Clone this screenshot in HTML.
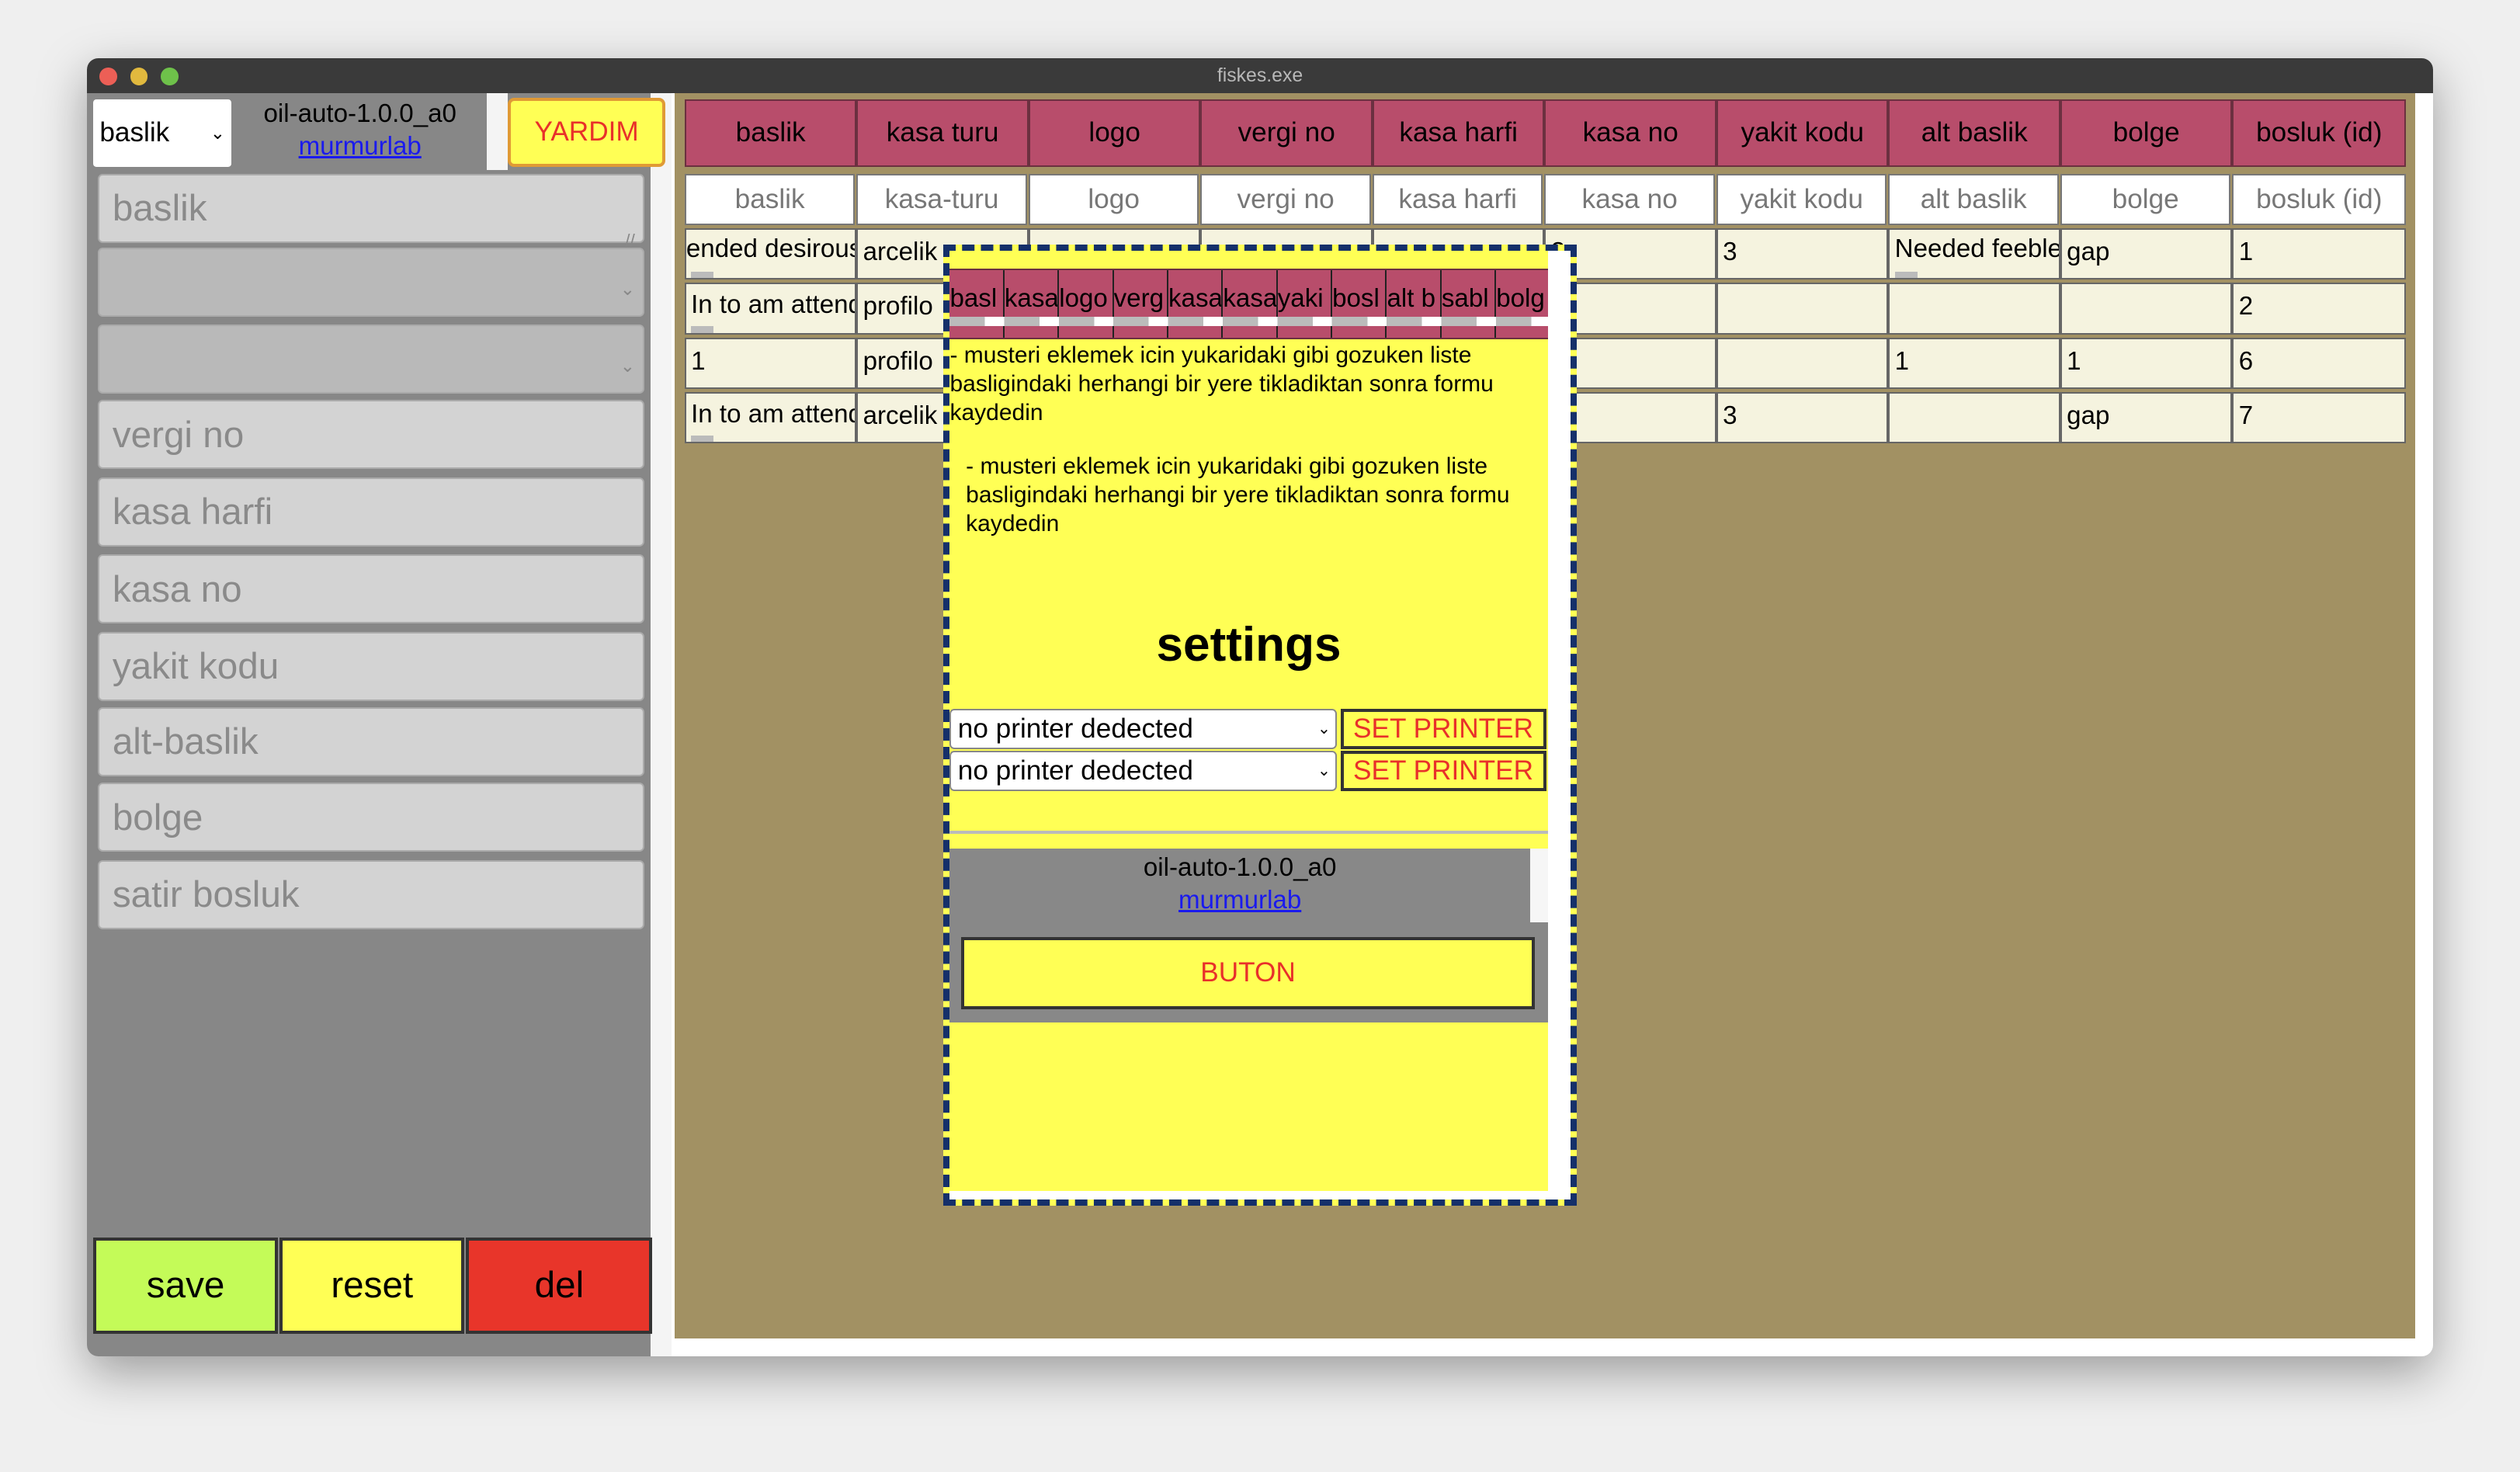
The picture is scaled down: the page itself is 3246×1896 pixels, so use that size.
<!DOCTYPE html>
<html><head><meta charset="utf-8"><style>
*{box-sizing:border-box;margin:0;padding:0}
html,body{width:3246px;height:1896px;overflow:hidden;background:#efefef}
#z{zoom:2.0702;width:1568px;height:916px;position:relative;font-family:"Liberation Sans",Arial,sans-serif}
.a{position:absolute}
.win{left:54px;top:36px;width:1460px;height:808px;border-radius:7px;overflow:hidden;box-shadow:0 10px 30px rgba(0,0,0,.35);background:#fff}
.tb{left:0;top:0;width:1460px;height:22px;background:#3a3a3a;color:#b8b8b8;font-size:12px;text-align:center;line-height:22px}
.dot{width:11px;height:11px;border-radius:50%;top:6px}
.fld{left:7px;width:340px;height:43px;background:#d3d3d3;border-radius:3px;color:#8a8a8a;font-size:23px;padding:8px 8px;line-height:26px;border:1px solid #aaa}
.sel{background:#b9b9b9}
.chev{position:absolute;right:5px;top:12px;font-size:11px;color:#888}
.btn{top:734px;height:60px;border:2px solid #333;font-size:23px;text-align:center;line-height:56px}
.th{height:42px;background:#b84d6b;border:1px solid #6b3040;font-size:17px;text-align:center;line-height:40px}
.ti{height:32px;background:#fff;border:1px solid #777;font-size:17px;color:#777;text-align:center;line-height:30px}
.td{height:32px;background:#f5f3df;border:1px solid #666;font-size:16px;line-height:28px;padding-left:3px;white-space:nowrap;overflow:hidden}
.sb{position:absolute;left:3px;bottom:0;width:14px;height:4px;background:#bbb}
</style></head><body><div id="z">
<div class="a win">
 <div class="a tb">fiskes.exe</div>
 <div class="a dot" style="left:8px;background:#ec5f56"></div>
 <div class="a dot" style="left:27px;background:#e1b93e"></div>
 <div class="a dot" style="left:46px;background:#6ec14a"></div>
 <!-- left panel -->
 <div class="a" style="left:0;top:22px;width:351px;height:786px;background:#878787"></div>
 <div class="a" style="left:351px;top:22px;width:13px;height:786px;background:#f4f4f4"></div>
 <div class="a" style="left:249px;top:22px;width:13px;height:48px;background:#f4f4f4"></div>
 <div class="a" style="left:4px;top:26px;width:86px;height:42px;background:#fff;border-radius:2px;font-size:17px;line-height:42px;padding-left:4px">baslik<span style="position:absolute;right:4px;font-size:11px">&#8964;</span></div>
 <div class="a" style="left:90px;top:25px;width:160px;text-align:center;font-size:16px;line-height:20px">oil-auto-1.0.0_a0<br><span style="color:#1a1aee;text-decoration:underline">murmurlab</span></div>
 <div class="a" style="left:262px;top:25px;width:98px;height:43px;background:#ffff55;border:2px solid #e09a35;border-radius:4px;color:#e8302a;font-size:17px;text-align:center;line-height:39px">YARDIM</div>
 <div class="a fld" style="top:72px">baslik<span class="chev" style="top:28px">//</span></div>
 <div class="a fld sel" style="top:118px"><span class="chev">&#8964;</span></div>
 <div class="a fld sel" style="top:166px"><span class="chev">&#8964;</span></div>
 <div class="a fld" style="top:213px">vergi no</div>
 <div class="a fld" style="top:261px">kasa harfi</div>
 <div class="a fld" style="top:309px">kasa no</div>
 <div class="a fld" style="top:357px">yakit kodu</div>
 <div class="a fld" style="top:404px">alt-baslik</div>
 <div class="a fld" style="top:451px">bolge</div>
 <div class="a fld" style="top:499px">satir bosluk</div>
 <div class="a btn" style="left:4px;width:115px;background:#c4fb58">save</div>
 <div class="a btn" style="left:120px;width:115px;background:#ffff55">reset</div>
 <div class="a btn" style="left:236px;width:116px;background:#e8352a">del</div>
 <!-- right -->
 <div class="a" style="left:366px;top:22px;width:1083px;height:775px;background:#a29163"></div>
 <div id="tbl"></div>
</div>
<div class="a" style="left:426px;top:62px">
 <div class="a th" style="left:0;width:107px">baslik</div><div class="a th" style="left:107px;width:107px">kasa turu</div><div class="a th" style="left:214px;width:107px">logo</div><div class="a th" style="left:321px;width:107px">vergi no</div><div class="a th" style="left:428px;width:107px">kasa harfi</div><div class="a th" style="left:535px;width:107px">kasa no</div><div class="a th" style="left:642px;width:107px">yakit kodu</div><div class="a th" style="left:749px;width:107px">alt baslik</div><div class="a th" style="left:856px;width:107px">bolge</div><div class="a th" style="left:963px;width:108px">bosluk (id)</div>
 <div class="a ti" style="top:46px;left:0;width:106px">baslik</div><div class="a ti" style="top:46px;left:107px;width:106px">kasa-turu</div><div class="a ti" style="top:46px;left:214px;width:106px">logo</div><div class="a ti" style="top:46px;left:321px;width:106px">vergi no</div><div class="a ti" style="top:46px;left:428px;width:106px">kasa harfi</div><div class="a ti" style="top:46px;left:535px;width:106px">kasa no</div><div class="a ti" style="top:46px;left:642px;width:106px">yakit kodu</div><div class="a ti" style="top:46px;left:749px;width:106px">alt baslik</div><div class="a ti" style="top:46px;left:856px;width:106px">bolge</div><div class="a ti" style="top:46px;left:963px;width:108px">bosluk (id)</div>
 <!-- row1 -->
 <div class="a td" style="top:80px;left:0;width:107px;padding-left:0;line-height:24px">ended desirous<span class="sb"></span></div><div class="a td" style="top:80px;left:107px;width:107px">arcelik</div><div class="a td" style="top:80px;left:214px;width:107px"></div><div class="a td" style="top:80px;left:321px;width:107px"></div><div class="a td" style="top:80px;left:428px;width:107px"></div><div class="a td" style="top:80px;left:535px;width:107px">2</div><div class="a td" style="top:80px;left:642px;width:107px">3</div><div class="a td" style="top:80px;left:749px;width:107px;line-height:24px">Needed feeble<span class="sb"></span></div><div class="a td" style="top:80px;left:856px;width:107px">gap</div><div class="a td" style="top:80px;left:963px;width:108px">1</div>
 <!-- row2 -->
 <div class="a td" style="top:114px;left:0;width:107px;line-height:26px">In to am attended<span class="sb"></span></div><div class="a td" style="top:114px;left:107px;width:107px">profilo</div><div class="a td" style="top:114px;left:214px;width:107px"></div><div class="a td" style="top:114px;left:321px;width:107px"></div><div class="a td" style="top:114px;left:428px;width:107px"></div><div class="a td" style="top:114px;left:535px;width:107px"></div><div class="a td" style="top:114px;left:642px;width:107px"></div><div class="a td" style="top:114px;left:749px;width:107px"></div><div class="a td" style="top:114px;left:856px;width:107px"></div><div class="a td" style="top:114px;left:963px;width:108px">2</div>
 <!-- row3 -->
 <div class="a td" style="top:148px;left:0;width:107px">1</div><div class="a td" style="top:148px;left:107px;width:107px">profilo</div><div class="a td" style="top:148px;left:214px;width:107px"></div><div class="a td" style="top:148px;left:321px;width:107px"></div><div class="a td" style="top:148px;left:428px;width:107px"></div><div class="a td" style="top:148px;left:535px;width:107px"></div><div class="a td" style="top:148px;left:642px;width:107px"></div><div class="a td" style="top:148px;left:749px;width:107px">1</div><div class="a td" style="top:148px;left:856px;width:107px">1</div><div class="a td" style="top:148px;left:963px;width:108px">6</div>
 <!-- row4 -->
 <div class="a td" style="top:182px;left:0;width:107px;line-height:26px">In to am attended<span class="sb"></span></div><div class="a td" style="top:182px;left:107px;width:107px">arcelik</div><div class="a td" style="top:182px;left:214px;width:107px"></div><div class="a td" style="top:182px;left:321px;width:107px"></div><div class="a td" style="top:182px;left:428px;width:107px"></div><div class="a td" style="top:182px;left:535px;width:107px">2</div><div class="a td" style="top:182px;left:642px;width:107px">3</div><div class="a td" style="top:182px;left:749px;width:107px"></div><div class="a td" style="top:182px;left:856px;width:107px">gap</div><div class="a td" style="top:182px;left:963px;width:108px">7</div>
</div>
<!-- modal -->
<div class="a" style="left:587px;top:152px;width:394px;height:598px;background:#fff;border:4px dashed #15306a;outline:4px solid #ffff55;outline-offset:-4px"></div>
<div class="a" style="left:587px;top:152px;width:394px;height:598px;border:4px dashed #15306a"></div>
<div class="a" style="left:591px;top:156px;width:372px;height:585px;background:#ffff55;overflow:hidden">
 <div class="a" style="left:0;top:11px;width:372px;height:44px;background:#b84d6b;border-top:1px solid #6b3040;border-bottom:1px solid #6b3040;display:flex;font-size:16px;line-height:36px;white-space:nowrap">
  <div style="width:34px;overflow:hidden;border-right:1px solid #222">basl</div><div style="width:34px;overflow:hidden;border-right:1px solid #222">kasa</div><div style="width:34px;overflow:hidden;border-right:1px solid #222">logo</div><div style="width:34px;overflow:hidden;border-right:1px solid #222">verg</div><div style="width:34px;overflow:hidden;border-right:1px solid #222">kasa</div><div style="width:34px;overflow:hidden;border-right:1px solid #222">kasa</div><div style="width:34px;overflow:hidden;border-right:1px solid #222">yaki</div><div style="width:34px;overflow:hidden;border-right:1px solid #222">bosl</div><div style="width:34px;overflow:hidden;border-right:1px solid #222">alt b</div><div style="width:34px;overflow:hidden;border-right:1px solid #222">sabl</div><div style="width:32px;overflow:hidden">bolg</div>
 </div>
 <div class="a" style="left:0;top:41px;width:372px;height:6px;background:repeating-linear-gradient(90deg,#bbb 0 22px,#fff 22px 34px)"></div>
 <div class="a" style="left:0;top:56px;width:372px;font-size:14.5px;line-height:18px">- musteri eklemek icin yukaridaki gibi gozuken liste basligindaki herhangi bir yere tikladiktan sonra formu kaydedin</div>
 <div class="a" style="left:10px;top:125px;width:355px;font-size:14.5px;line-height:18px">- musteri eklemek icin yukaridaki gibi gozuken liste basligindaki herhangi bir yere tikladiktan sonra formu kaydedin</div>
 <div class="a" style="left:0;top:228px;width:372px;text-align:center;font-size:30px;font-weight:bold">settings</div>
 <div class="a" style="left:0;top:285px;width:241px;height:25px;background:#fff;border:1px solid #888;border-radius:3px;font-size:17px;line-height:23px;padding-left:4px">no printer dedected<span style="position:absolute;right:3px;font-size:10px">&#8964;</span></div>
 <div class="a" style="left:243px;top:285px;width:128px;height:25px;background:#ffff55;border:2px solid #333;color:#e8302a;font-size:17px;line-height:21px;text-align:center">SET PRINTER</div>
 <div class="a" style="left:0;top:311px;width:241px;height:25px;background:#fff;border:1px solid #888;border-radius:3px;font-size:17px;line-height:23px;padding-left:4px">no printer dedected<span style="position:absolute;right:3px;font-size:10px">&#8964;</span></div>
 <div class="a" style="left:243px;top:311px;width:128px;height:25px;background:#ffff55;border:2px solid #333;color:#e8302a;font-size:17px;line-height:21px;text-align:center">SET PRINTER</div>
 <div class="a" style="left:0;top:361px;width:372px;height:2px;background:#bbb"></div>
 <div class="a" style="left:0;top:372px;width:361px;height:46px;background:#888;text-align:center;font-size:16px;line-height:20px;padding-top:2px">oil-auto-1.0.0_a0<br><span style="color:#1a1aee;text-decoration:underline">murmurlab</span></div>
 <div class="a" style="left:361px;top:372px;width:11px;height:46px;background:#f6f6f6"></div>
 <div class="a" style="left:0;top:418px;width:372px;height:62px;background:#888"></div>
 <div class="a" style="left:7px;top:427px;width:357px;height:45px;background:#ffff55;border:2px solid #333;color:#e8302a;font-size:17px;line-height:41px;text-align:center">BUTON</div>
</div>
</div></body></html>
